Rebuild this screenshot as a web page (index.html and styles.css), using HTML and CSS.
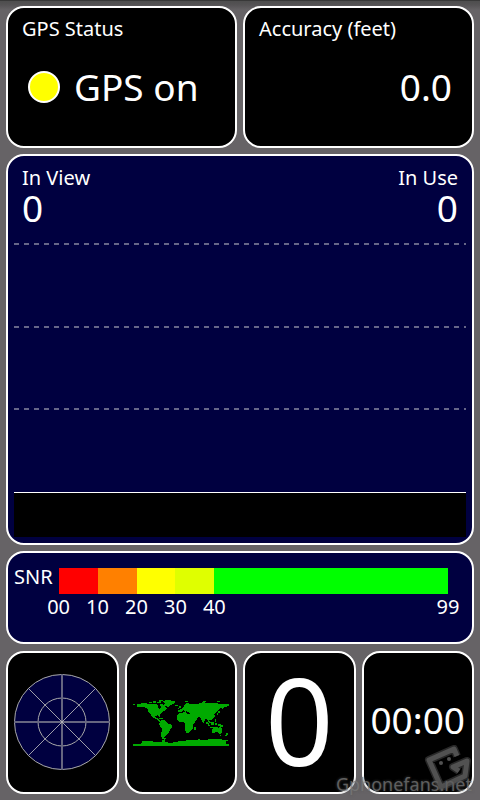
FILE: index.html
```html
<!DOCTYPE html>
<html lang="en">
<head>
    <meta charset="UTF-8">
    <meta name="viewport" content="width=device-width, initial-scale=1.0">
    <title>GPS Status</title>
    <link rel="stylesheet" href="styles.css">
</head>
<body>

    <main class="dashboard">
        <section class="panel status">
            <h2 class="label">GPS Status</h2>
            <p class="value status-value"><span class="light"></span>GPS on</p>
        </section>

        <section class="panel accuracy">
            <h2 class="label">Accuracy (feet)</h2>
            <p class="value accuracy-value">0.0</p>
        </section>

        <section class="panel satellites">
            <div class="band band-header">
                <div>
                    <h2 class="label">In View</h2>
                    <p class="value">0</p>
                </div>
                <div class="in-use">
                    <h2 class="label">In Use</h2>
                    <p class="value">0</p>
                </div>
            </div>
            <div class="band"></div>
            <div class="band"></div>
            <div class="band band-last"></div>
            <div class="ids"></div>
        </section>

        <section class="panel snr">
            <h2 class="label">SNR</h2>
            <div class="scale">
                <span class="step red"><span class="tick">00</span></span>
                <span class="step orange"><span class="tick">10</span></span>
                <span class="step yellow"><span class="tick">20</span></span>
                <span class="step lime"><span class="tick">30</span></span>
                <span class="step green"><span class="tick">40</span><span class="tick tick-end">99</span></span>
            </div>
        </section>

        <nav class="tabs">
            <button class="panel tab" type="button" aria-label="Sky view">
                <svg class="radar" viewBox="0 0 96 96">
                    <circle cx="48" cy="48" r="47.5" fill="#000040" stroke="#a9a9a9"/>
                    <circle cx="48" cy="48" r="24" fill="none" stroke="#a9a9a9"/>
                    <path d="M48 0v96M0 48h96" stroke="#666680" stroke-width="2"/>
                    <path d="M14.5 14.5l67 67M81.5 14.5l-67 67" stroke="#c4c4c4" stroke-width="0.8"/>
                </svg>
            </button>
            <button class="panel tab" type="button" aria-label="World map">
                <svg class="map" viewBox="0 0 96 48" shape-rendering="crispEdges">
                    <g fill="#00aa00">
                        <!-- north america -->
                        <path d="M0 6h2v1h-2zM4 6L11 5L16 6L22 6L25 7L25 10L27 11L28 9L27 6L30 6L32 9L34 11L31 13L28 15L27 16L27 19L26 19L25 17L22 18L23 20L25 20L26 22L28 23L27 24L23 21L20 20L18 17L16 15L15 12L13 10L10 9L4 9z"/>
                        <!-- arctic islands and greenland -->
                        <path d="M16 4h3v1h-3zM20 3h3v2h-3zM24 4h2v1h-2zM26 2h4v1h-2v2h-2zM31 6h3v2h-3zM29 3L34 2L42 3L42 5L38 7L35 9L33 8L32 5zM42 7h3v1h-3zM26 20h4v1h-4z"/>
                        <!-- south america -->
                        <path d="M28 22L32 22L34 25L39 27L39 29L37 32L36 34L34 36L32 38L31 41L29 41L28 37L29 31L27 28L26 26z"/>
                        <!-- africa -->
                        <path d="M46 15L53 14L54 16L59 16L61 20L64 21L62 24L60 27L60 30L58 32L56 35L53 35L52 31L52 26L50 24L46 24L44 21L44 18z"/>
                        <path d="M61 29h2v3h-2z"/>
                        <!-- europe and asia -->
                        <path d="M45 14L45 12L48 11L50 9L52 9L50 8L54 5L58 6L64 6L67 5L70 4L74 5L82 5L88 6L96 6L96 8L91 9L90 12L88 10L86 11L84 13L83 15L81 16L82 18L81 20L79 21L78 23L77 21L76 22L78 25L76 25L74 21L72 21L71 25L69 24L68 20L65 19L64 21L61 23L59 18L57 15L54 14L54 12L52 14L50 12L48 14z"/>
                        <path d="M46 8h2v2h-2zM45 10h1v1h-1zM52 3h3v1h-3zM70 3h3v1h-3zM84 3h3v1h-3zM85 13h2v2h-2zM84 15h1v2h-1z"/>
                        <!-- indonesia -->
                        <path d="M73 24h2v1h1v2h1v1h-2v-2h-2zM78 24h3v3h-3zM82 21h1v3h-1zM82 25h2v2h-2zM77 29h5v1h-5zM85 26h3v1h2v2h-3v-1h-2z"/>
                        <!-- australia and new zealand -->
                        <path d="M79 31L82 29L85 29L86 31L87 28L89 31L89 34L87 36L84 34L79 35zM87 37h1v1h-1zM93 35h2v2h-1v1h-2v-1h1z"/>
                        <!-- antarctica -->
                        <path d="M0 48v-2h8v-1h1v-2h11v1h9v-2h2v-2h2v1h-1v3h3v1h5v-1h5v-1h8v-1h12v-1h2v1h8v-1h14v1h6v1h-2v3h3v2z"/>
                    </g>
                </svg>
            </button>
            <button class="panel tab tab-speed" type="button">0</button>
            <button class="panel tab tab-time" type="button">00:00</button>
        </nav>
    </main>

    <div class="watermark">
        <svg class="watermark-logo" viewBox="0 0 48 48">
            <g fill="none" stroke-linejoin="round">
                <path d="M33 12l-3-7-25 11 12 27 24-11 2-15-14 6 6 4" stroke="#333" stroke-width="8"/>
                <path d="M33 12l-3-7-25 11 12 27 24-11 2-15-14 6 6 4" stroke="#666" stroke-width="5"/>
            </g>
            <circle cx="17" cy="19" r="2" fill="#666"/>
            <circle cx="25" cy="15" r="2" fill="#666"/>
        </svg>
        <span class="watermark-text">Gphonefans.net</span>
    </div>

</body>
</html>
```
FILE: styles.css
```css
* {
    box-sizing: border-box;
}

body {
    margin: 0;
    min-height: 100vh;
    background: linear-gradient(#222 0, #4e4e4e 1px, #555355 5px, #666366 10px);
    color: #fff;
    font-family: "Noto Sans", "Open Sans", sans-serif;
}

h2, p {
    margin: 0;
    font-weight: normal;
}

.dashboard {
    display: grid;
    grid-template-columns: 1fr 1fr;
    grid-template-rows: 142px 1fr 93px 144px;
    gap: 6px;
    min-height: 100vh;
    padding: 6px;
}

.panel {
    border: 2px solid #fff;
    border-radius: 18px;
    background-color: #000;
}

.label {
    font-size: 20px;
    line-height: 26px;
}

.value {
    font-size: 37px;
    line-height: 34px;
}

.status, .accuracy {
    padding: 8px 14px;
}

.status-value {
    display: flex;
    align-items: center;
    gap: 14px;
    padding: 28px 6px;
}

.light {
    width: 32px;
    height: 32px;
    border: 2px solid #fff;
    border-radius: 50%;
    background-color: #ff0;
}

.accuracy-value {
    padding: 28px 6px;
    text-align: right;
}

.satellites {
    grid-column: 1 / -1;
    display: grid;
    grid-template-rows: repeat(4, 1fr) 44px;
    padding: 6px;
    background-color: #000040;
}

.band {
    background: repeating-linear-gradient(90deg, #666688 0 5px, transparent 5px 10px) bottom / 100% 2px no-repeat;
}

.band-header {
    display: flex;
    justify-content: space-between;
    padding: 3px 8px;
}

.band-last {
    background: none;
    border-bottom: 1px solid #fff;
}

.in-use {
    text-align: right;
}

.ids {
    background-color: #000;
}

.snr, .tabs {
    grid-column: 1 / -1;
}

.snr {
    display: flex;
    gap: 6px;
    padding: 11px 24px 0 6px;
    background-color: #000040;
}

.scale {
    flex: 1;
    display: flex;
    height: 25px;
    margin-top: 4px;
}

.step {
    flex: 10;
    display: flex;
    justify-content: space-between;
    padding-top: 26px;
}

.tick {
    width: 40px;
    margin-left: -20px;
    font-size: 20px;
    line-height: 26px;
    text-align: center;
}

.tick-end {
    margin-right: -20px;
}

.red {
    background-color: #f00;
}

.orange {
    background-color: #ff8000;
}

.yellow {
    background-color: #ff0;
}

.lime {
    background-color: #dfff00;
}

.green {
    flex: 60;
    background-color: #0f0;
}

.tabs {
    display: grid;
    grid-template-columns: repeat(4, 1fr);
    gap: 6px;
    padding-top: 1px;
}

.tab {
    display: flex;
    align-items: center;
    justify-content: center;
    padding: 0 0 2px;
    color: #fff;
    font-family: inherit;
}

.radar, .map {
    flex: none;
    width: 96px;
}

.tab-speed {
    padding-bottom: 6px;
    font-size: 120px;
    line-height: 120px;
}

.tab-time {
    padding-bottom: 6px;
    font-size: 37px;
}

.watermark {
    position: absolute;
    right: 8px;
    bottom: 4px;
    display: flex;
    flex-direction: column;
    align-items: flex-end;
    opacity: 0.8;
    pointer-events: none;
}

.watermark-logo {
    width: 48px;
    margin-bottom: -20px;
}

.watermark-text {
    color: #777;
    font-size: 18px;
    line-height: 24px;
    text-shadow: 0 0 3px #555;
}
```
